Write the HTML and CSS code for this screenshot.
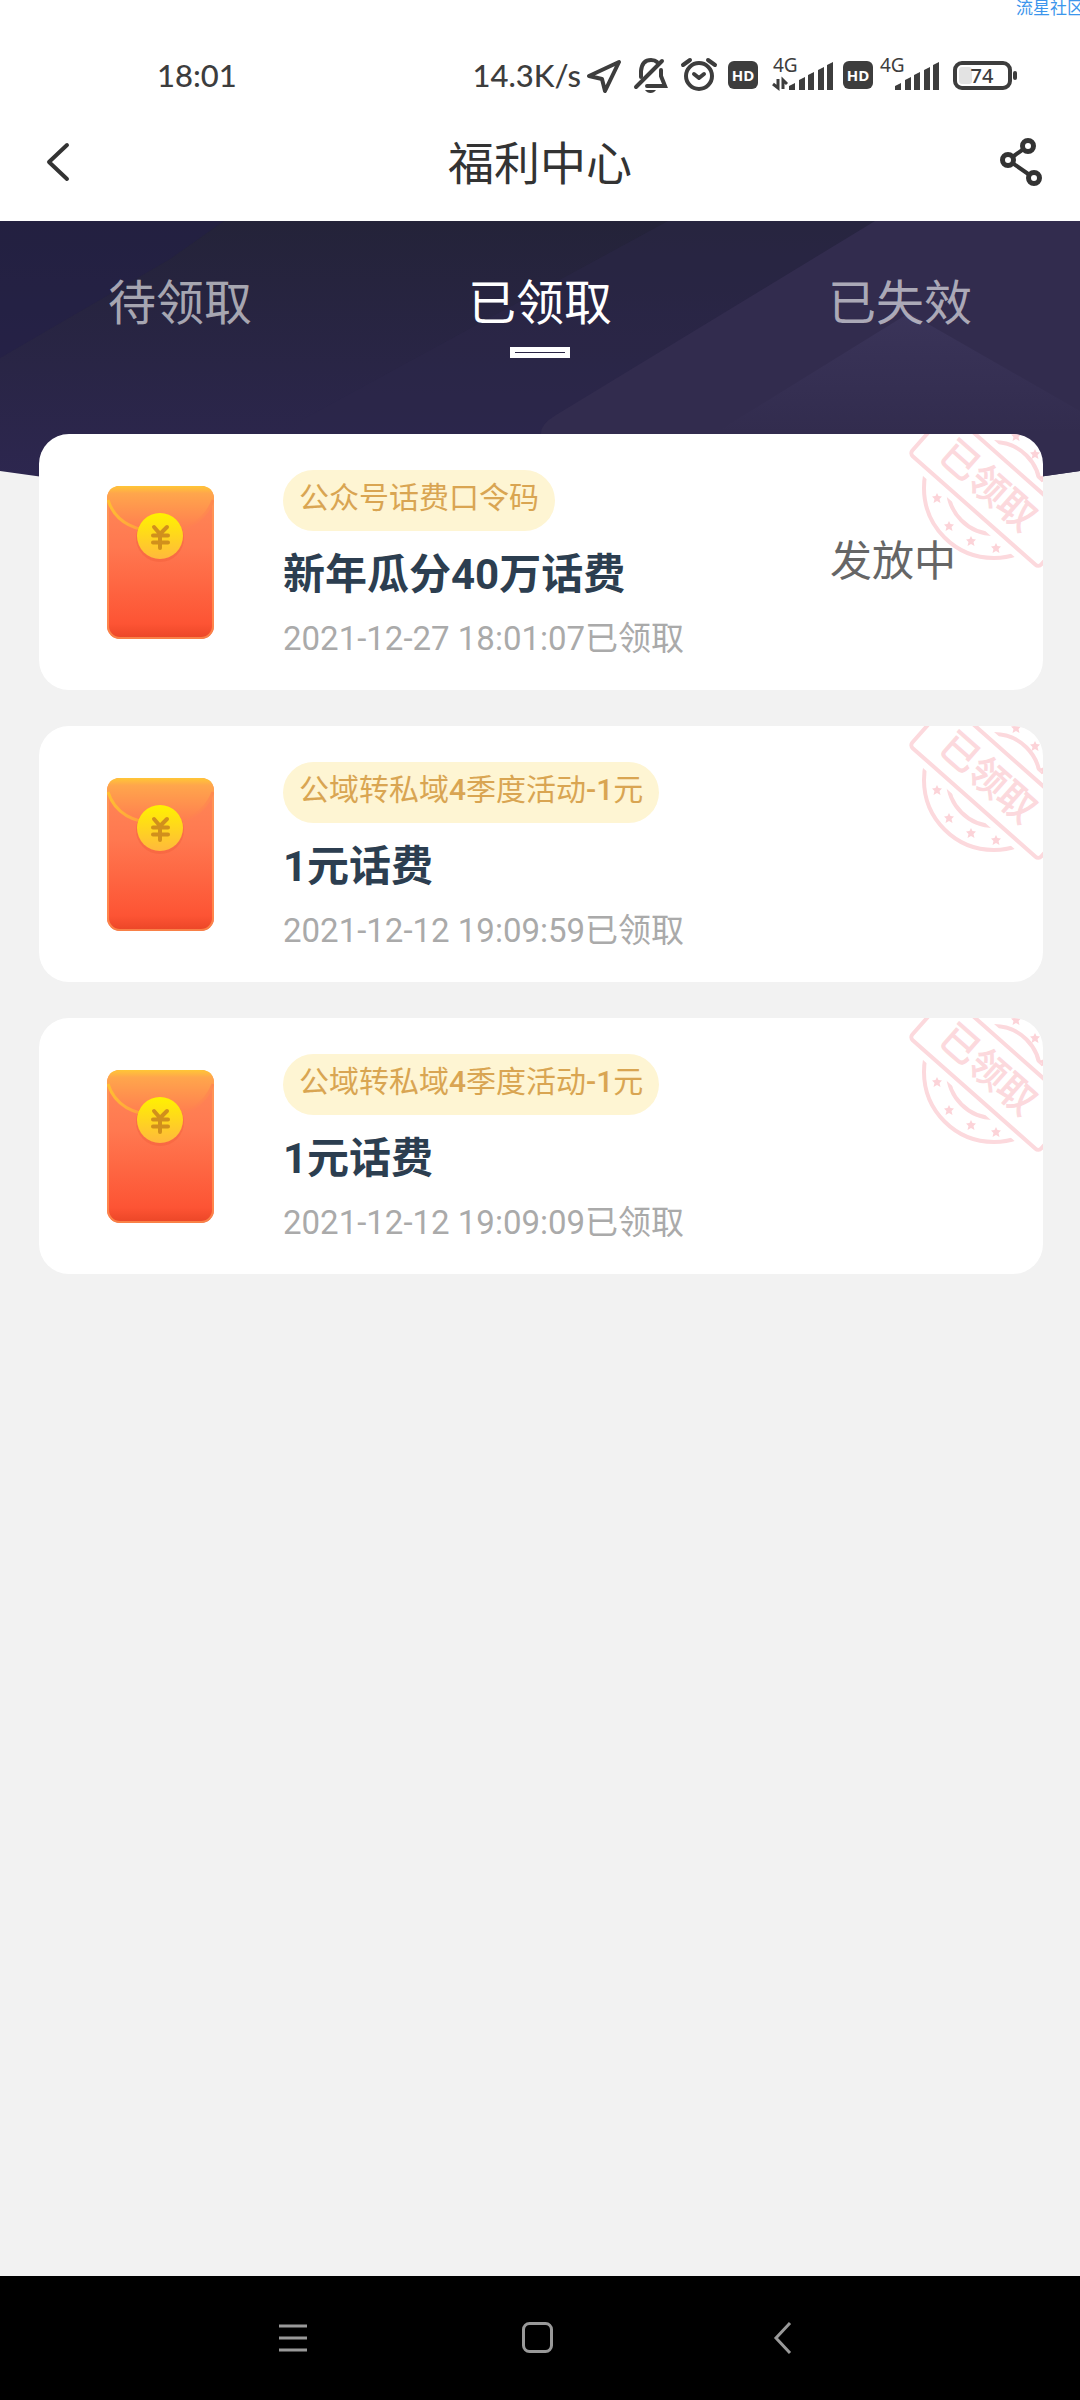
FILE: index.html
```html
<!DOCTYPE html>
<html lang="zh-CN">
<head>
<meta charset="utf-8">
<meta name="viewport" content="width=device-width, initial-scale=1">
<title>福利中心</title>
<link rel="stylesheet" href="styles.css">
</head>
<body>
<svg class="defs" aria-hidden="true">
  <defs>
    <linearGradient id="paper" x1="0" y1="0" x2="0" y2="1">
      <stop offset="0" stop-color="#ff8a58"/><stop offset=".4" stop-color="#ff7850"/><stop offset=".9" stop-color="#fd5434"/><stop offset="1" stop-color="#ea4526"/>
    </linearGradient>
    <linearGradient id="flap" x1="0" y1="0" x2="0" y2="1">
      <stop offset="0" stop-color="#ffc636"/><stop offset=".16" stop-color="#ffa64c"/><stop offset="1" stop-color="#ff7a50"/>
    </linearGradient>
    <linearGradient id="rim" x1="0" y1="0" x2="1" y2="0">
      <stop offset="0" stop-color="#ffbe32"/><stop offset=".3" stop-color="#ffa03e"/><stop offset=".6" stop-color="#ff7a50" stop-opacity="0"/><stop offset="1" stop-color="#ff8a50"/>
    </linearGradient>
    <linearGradient id="coin" x1="0" y1="0" x2="0" y2="1">
      <stop offset="0" stop-color="#fff200"/><stop offset="1" stop-color="#ffb93c"/>
    </linearGradient>
    <symbol id="envelope" viewBox="0 0 107 153">
      <rect width="107" height="153" rx="13" fill="url(#paper)"/>
      <rect x="1" y="1" width="105" height="151" rx="12" fill="none" stroke="#ff9a55" stroke-width="2" opacity=".7"/>
      <path d="M0 14Q0 0 13 0H94Q107 0 107 14C100 34 78 46 53 46S7 36 0 14Z" fill="url(#flap)"/>
      <path d="M1 14C8 36 28 45 53 46S99 34 106 14" fill="none" stroke="url(#rim)" stroke-width="3"/>
      <circle cx="53" cy="52" r="24" fill="#e8502c" opacity=".25"/>
      <circle cx="53" cy="50" r="23" fill="url(#coin)"/>
      <path d="M47 41L53 48L60 41M46 49.500H61M46 56.500H61M53 48V62" fill="none" stroke="#d1901c" stroke-width="4" stroke-linecap="round" stroke-linejoin="round"/>
    </symbol>
    <path id="star" d="M0-5L1.500-2L5-1.500L2.500 1L3.500 5L0 3L-3.500 5L-2.500 1L-5-1.500L-1.500-2Z"/>
    <symbol id="stamp" viewBox="0 0 140 140">
      <g transform="translate(91 54)" fill="none" stroke="#fcd9dd" stroke-width="4">
        <circle r="70"/>
        <circle r="46"/>
        <g fill="#fcd3d8" stroke="none">
          <use href="#star" x="-57" y="10"/><use href="#star" x="-45" y="38"/><use href="#star" x="-23" y="53"/><use href="#star" x="2" y="60"/>
          <use href="#star" x="22" y="-52"/><use href="#star" x="41" y="-34"/><use href="#star" x="50" y="-10"/>
        </g>
        <g transform="rotate(41.500)">
          <rect x="-94" y="-36" width="188" height="74" fill="#fff" stroke="none"/>
          <rect x="-86" y="-28" width="172" height="58" rx="4"/>
          <text class="stamp-text" x="-6" y="15" text-anchor="middle">已领取</text>
        </g>
      </g>
    </symbol>
    <symbol id="hd" viewBox="0 0 30 28">
      <rect width="30" height="28" rx="6" fill="#3d3d3d"/>
      <text class="hd-text" x="15" y="20" text-anchor="middle">HD</text>
    </symbol>
    <symbol id="bars" viewBox="0 0 44 28">
      <path d="M0 28V24L6 21V28ZM10 28V18L16 15V28ZM19 28V13L25 10V28ZM29 28V8L35 5V28ZM38 28V3L44 0V28Z" fill="#3d3d3d"/>
    </symbol>
  </defs>
</svg>

<div class="page">
  <span class="watermark">流星社区</span>

  <div class="status">
    <span class="clock">18:01</span>
    <div class="indicators">
      <span class="speed">14.3K/s</span>
      <svg width="42" height="36" viewBox="584 56 42 36" aria-label="定位"><path d="M587 75L617 61L603 90L600 78Z" fill="none" stroke="#3d3d3d" stroke-width="4" stroke-linejoin="round"/></svg>
      <svg width="42" height="36" viewBox="631 56 42 36" aria-label="静音"><g fill="none" stroke="#3d3d3d" stroke-width="4" stroke-linecap="round"><path d="M639 76V70Q640 59 649 59Q653 59 655 61M659 69V75L663 85H645"/><path d="M634 86L660 60"/></g><path d="M643 89H654Q652 92 648.500 92T643 89Z" fill="#3d3d3d"/></svg>
      <svg width="43" height="36" viewBox="678 56 43 36" aria-label="闹钟"><g fill="none" stroke="#3d3d3d" stroke-width="4" stroke-linecap="round" stroke-linejoin="round"><circle cx="697" cy="75" r="13"/><path d="M692 73L697 77L702 73M681 64L688 59M706 59L713 64"/></g></svg>
      <svg width="36" height="28" viewBox="0 0 36 28"><use href="#hd" width="30" height="28"/></svg>
      <svg width="69" height="60" viewBox="767 44 69 60" aria-label="4G"><text class="net" x="771" y="71">4G</text><path d="M776 78V87L771 83M781 88V79L785 83" fill="none" stroke="#3d3d3d" stroke-width="3"/><use href="#bars" x="787" y="61" width="44" height="28"/></svg>
      <svg width="31" height="28" viewBox="0 0 31 28"><use href="#hd" width="30" height="28"/></svg>
      <svg width="64" height="60" viewBox="877 44 64 60" aria-label="4G"><text class="net" x="878" y="71">4G</text><use href="#bars" x="893" y="61" width="44" height="28"/></svg>
      <svg width="72" height="36" viewBox="946 56 72 36" aria-label="电量"><rect x="953" y="62" width="55" height="25" rx="7" fill="#fff" stroke="#3d3d3d" stroke-width="4"/><rect x="957" y="66" width="13" height="17" rx="3" fill="#e3e3e3"/><rect x="1011" y="70" width="4" height="9" rx="2" fill="#3d3d3d"/><text class="level" x="980" y="82" text-anchor="middle">74</text></svg>
    </div>
  </div>

  <header class="header">
    <button class="icon-button" aria-label="返回"><svg width="40" height="48" viewBox="41 139 40 48"><path d="M68 145L50 162L68 179" fill="none" stroke="#333" stroke-width="4" stroke-linecap="round" stroke-linejoin="round"/></svg></button>
    <h1>福利中心</h1>
    <button class="icon-button" aria-label="分享"><svg width="48" height="54" viewBox="997 136 48 54"><path d="M1028 146L1008 160L1034 178" fill="none" stroke="#333" stroke-width="4"/><g fill="#fff" stroke="#333" stroke-width="5"><circle cx="1028" cy="146" r="5.500"/><circle cx="1008" cy="160" r="5.500"/><circle cx="1034" cy="178" r="5.500"/></g></svg></button>
  </header>

  <main class="main">
    <svg class="hero-art" viewBox="0 0 1080 290" preserveAspectRatio="none" aria-hidden="true">
      <defs>
        <linearGradient id="night" x1="0" y1="0" x2="0" y2="1"><stop offset="0" stop-color="#242339"/><stop offset="1" stop-color="#2e2752"/></linearGradient>
        <linearGradient id="peak" x1="0" y1="0" x2="0" y2="1"><stop offset="0" stop-color="#3a3459"/><stop offset="1" stop-color="#322c4e"/></linearGradient>
        <clipPath id="arc"><path d="M0 0H1080V250Q540 330 0 250Z"/></clipPath>
      </defs>
      <g clip-path="url(#arc)">
        <rect width="1080" height="290" fill="url(#night)"/>
        <path d="M0 0H224L170 38L0 137Z" fill="#221e48" opacity=".5"/>
        <path d="M668 0H880L545 205V290H300V200Z" fill="#2c274c" opacity=".4"/>
        <path d="M875 0H1080V290H541V212Q541 203 556 194Z" fill="#322c4e"/>
        <path d="M909 92L1080 190V212H715Z" fill="url(#peak)"/>
      </g>
    </svg>

    <nav class="tabs">
      <button class="tab">待领取</button>
      <button class="tab active">已领取</button>
      <button class="tab">已失效</button>
    </nav>

    <ul class="cards">
      <li class="card">
        <svg class="envelope" aria-hidden="true"><use href="#envelope"/></svg>
        <div class="info">
          <span class="tag">公众号话费口令码</span>
          <h2>新年瓜分40万话费</h2>
          <p class="date">2021-12-27 18:01:07已领取</p>
        </div>
        <svg class="stamp" aria-label="已领取"><use href="#stamp"/></svg>
        <span class="state">发放中</span>
      </li>
      <li class="card">
        <svg class="envelope" aria-hidden="true"><use href="#envelope"/></svg>
        <div class="info">
          <span class="tag">公域转私域<b>4</b>季度活动<b>-1</b>元</span>
          <h2>1元话费</h2>
          <p class="date">2021-12-12 19:09:59已领取</p>
        </div>
        <svg class="stamp" aria-label="已领取"><use href="#stamp"/></svg>
      </li>
      <li class="card">
        <svg class="envelope" aria-hidden="true"><use href="#envelope"/></svg>
        <div class="info">
          <span class="tag">公域转私域<b>4</b>季度活动<b>-1</b>元</span>
          <h2>1元话费</h2>
          <p class="date">2021-12-12 19:09:09已领取</p>
        </div>
        <svg class="stamp" aria-label="已领取"><use href="#stamp"/></svg>
      </li>
    </ul>
  </main>

  <nav class="system-nav">
    <button aria-label="最近任务"><svg width="36" height="36" viewBox="0 0 36 36"><path d="M4 6H32M4 18H32M4 30H32" stroke="#999" stroke-width="3"/></svg></button>
    <button aria-label="主页"><svg width="36" height="36" viewBox="0 0 36 36"><rect x="3.500" y="3.500" width="28" height="28" rx="6" fill="none" stroke="#999" stroke-width="3"/></svg></button>
    <button aria-label="返回"><svg width="36" height="36" viewBox="0 0 36 36"><path d="M25 3L11 18L25 33" fill="none" stroke="#999" stroke-width="3"/></svg></button>
  </nav>
</div>
</body>
</html>
```
FILE: styles.css
```css
* {
  box-sizing: border-box;
}

body {
  margin: 0;
  background: #f2f2f2;
  font-family: Roboto, "Noto Sans CJK SC", sans-serif;
}

h1, h2, p, ul {
  margin: 0;
  padding: 0;
}

button {
  padding: 0;
  border: 0;
  background: none;
  font: inherit;
}

svg {
  display: block;
  flex: none;
}

.defs {
  position: absolute;
  width: 0;
  height: 0;
}

.page {
  position: relative;
  display: flex;
  flex-direction: column;
  min-height: 100vh;
  overflow: hidden;
}

.watermark {
  position: absolute;
  top: 0;
  right: -4px;
  color: #3c96ec;
  font-size: 17px;
  line-height: 16px;
}

/* status bar */
.status {
  display: flex;
  align-items: center;
  justify-content: space-between;
  height: 104px;
  padding: 46px 60px 0 157px;
  background: #fff;
  color: #3d3d3d;
  font-family: Lato, sans-serif;
  font-size: 31px;
  line-height: 58px;
  font-weight: 500;
}

.indicators {
  display: flex;
  align-items: center;
  gap: 5px;
}

.net {
  fill: #3d3d3d;
  font: 19px "Noto Sans", sans-serif;
}

.hd-text {
  fill: #fff;
  font: bold 15px "Open Sans", sans-serif;
}

.level {
  fill: #3d3d3d;
  font: 500 20px "Noto Sans", sans-serif;
}

/* title bar */
.header {
  display: flex;
  align-items: center;
  justify-content: space-between;
  height: 117px;
  padding: 0 35px 0 40px;
  background: #fff;
  color: #333;
}

.header h1 {
  padding: 3px 0 0 3px;
  font-size: 46px;
  line-height: 68px;
  font-weight: 400;
}

/* tabs */
.main {
  position: relative;
  flex: 1;
}

.hero-art {
  position: absolute;
  top: 0;
  left: 0;
  width: 100%;
  height: 290px;
}

.tabs {
  position: relative;
  display: grid;
  grid-template-columns: repeat(3, 1fr);
  height: 213px;
  padding-top: 48px;
}

.tab {
  display: flex;
  flex-direction: column;
  align-items: center;
  gap: 8px;
  color: rgba(255, 255, 255, .6);
  font-size: 48px;
  line-height: 70px;
}

.tab.active {
  color: #fff;
}

.tab.active::after {
  content: "";
  box-sizing: border-box;
  width: 60px;
  height: 11px;
  border: 5px solid #fff;
}

/* reward cards */
.cards {
  position: relative;
  display: grid;
  gap: 36px;
  padding: 0 37px 36px 39px;
  list-style: none;
}

.card {
  position: relative;
  display: flex;
  align-items: center;
  min-height: 256px;
  padding: 0 87px 0 68px;
  border-radius: 30px;
  background: #fff;
  overflow: hidden;
}

.envelope {
  width: 107px;
  height: 153px;
}

.info {
  flex: 1;
  margin-left: 69px;
  padding-top: 8px;
}

.tag {
  display: block;
  width: fit-content;
  height: 61px;
  padding: 0 16px;
  border-radius: 31px;
  background: #fef5d3;
  color: #d9a552;
  font-size: 30px;
  line-height: 56px;
}

.tag b {
  font-weight: 500;
}

.info h2 {
  margin-top: 12px;
  color: #2c3e50;
  font-size: 42px;
  line-height: 64px;
}

.date {
  margin-top: 8px;
  color: #aaa;
  font-size: 33px;
  line-height: 48px;
}

.stamp {
  position: absolute;
  top: 0;
  right: 0;
  width: 140px;
  height: 140px;
}

.stamp-text {
  fill: #fcd9dd;
  stroke: #fcd9dd;
  stroke-width: 1px;
  font: 38px "Noto Sans CJK SC", sans-serif;
}

.state {
  position: relative;
  color: #666;
  font-size: 42px;
  line-height: 60px;
}

/* system navigation */
.system-nav {
  display: flex;
  justify-content: center;
  height: 124px;
  padding-right: 4px;
  background: #000;
}

.system-nav button {
  display: flex;
  align-items: center;
  justify-content: center;
  width: 245px;
}
```
